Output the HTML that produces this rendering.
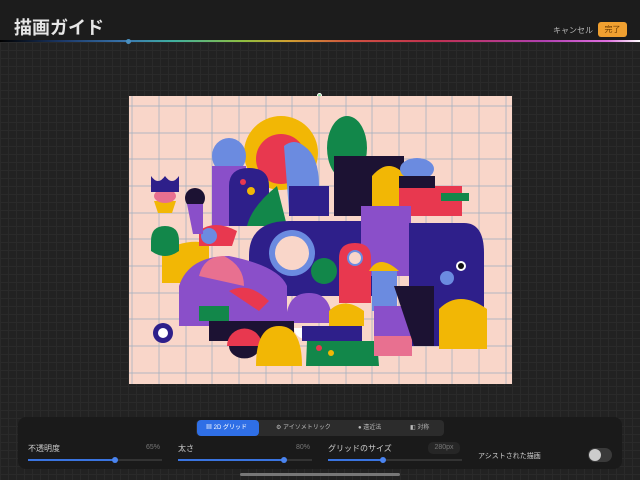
<!DOCTYPE html><html><head><meta charset="utf-8"><style>
*{margin:0;padding:0;box-sizing:border-box}
body{width:640px;height:480px;overflow:hidden;background:#202020;font-family:"Liberation Sans","Noto Sans CJK JP",sans-serif;position:relative;color:#ddd}
.bg{position:absolute;left:0;top:42px;width:640px;height:438px;background-color:#222;background-image:linear-gradient(#2a2a2a 1px,transparent 1px),linear-gradient(90deg,#2a2a2a 1px,transparent 1px);background-size:8px 8px}
.top{position:absolute;left:0;top:0;width:640px;height:41px;background:#1c1c1c}
.title{position:absolute;left:14px;top:14px;font-size:18px;font-weight:bold;color:#e6e6e6}
.cancel{position:absolute;left:553px;top:25px;font-size:8px;color:#bbb}
.done{position:absolute;left:598px;top:22px;width:29px;height:15px;background:#f0a030;border-radius:3px;font-size:8px;color:#6a3a00;text-align:center;line-height:15px}
.rain{position:absolute;left:0;top:40px;width:640px;height:2px;background:linear-gradient(90deg,#000 0%,#1d3a6a 10%,#3a78b0 20%,#3fb0a0 27%,#8fbf40 38%,#d0a030 45%,#d05040 55%,#c03050 68%,#b040b0 85%,#e070e0 95%,#fff 100%)}
.dot{position:absolute;left:126px;top:39px;width:5px;height:5px;border-radius:50%;background:#4a90c0}
.canvas{position:absolute;left:129px;top:96px;width:383px;height:288px}
.panel{position:absolute;left:18px;top:417px;width:604px;height:52px;background:#1a1a1a;border-radius:8px}
.tabs{position:absolute;left:196px;top:420px;width:248px;height:16px;background:#2c2c2c;border-radius:4px;font-size:6px;color:#bbb}
.tab{position:absolute;top:0;height:16px;line-height:16px}
.act{left:1px;width:62px;background:#2f6fe6;border-radius:4px;color:#fff;padding-left:9px}
.lab{position:absolute;font-size:8px;color:#cfcfcf;top:443px}
.pct{position:absolute;font-size:7px;color:#777;top:444px}
.track{position:absolute;top:459px;height:2px;background:#333;width:134px}
.fill{position:absolute;left:0;top:0;height:2px;background:#3a74e0}
.thumb{position:absolute;top:-2px;width:6px;height:6px;border-radius:50%;background:#4a84f0}
</style></head><body>
<div class="bg"></div>
<div class="top"></div>
<div class="title">描画ガイド</div>
<div class="cancel">キャンセル</div>
<div class="done">完了</div>
<div class="rain"></div><div class="dot"></div>
<div style="position:absolute;left:317px;top:93px;width:5px;height:5px;border-radius:50%;background:#8fdc9a;border:1px solid #fff"></div>
<svg class="canvas" viewBox="0 0 383 288" width="383" height="288">
<rect width="383" height="288" fill="#f9d6c9"/>
<g stroke="#8ea6bd" stroke-width="0.7" opacity="0.85">
<path d="M3 0V288M30 0V288M57 0V288M83 0V288M110 0V288M137 0V288M163 0V288M190 0V288M217 0V288M243 0V288M270 0V288M297 0V288M323 0V288M350 0V288M377 0V288"/>
<path d="M0 10H383M0 37H383M0 63H383M0 90H383M0 117H383M0 143H383M0 170H383M0 197H383M0 223H383M0 250H383M0 277H383"/>
</g>
<circle cx="152" cy="57" r="37" fill="#f2b705"/>
<circle cx="152" cy="63" r="25" fill="#e8384f"/>
<ellipse cx="218" cy="52" rx="20" ry="32" fill="#12874a"/>
<path d="M205 60h70v60h-70z" fill="#1c1233"/>
<ellipse cx="100" cy="60" rx="17" ry="18" fill="#6b8be0"/>
<rect x="83" y="70" width="34" height="60" fill="#8a4fc9"/>
<path d="M100 130V90q0-18 20-18t20 18v40z" fill="#2e1f8a"/>
<circle cx="114" cy="86" r="3" fill="#e8384f"/><circle cx="122" cy="95" r="4" fill="#f2b705"/>
<path d="M155 50q10-8 20 0q15 10 15 40l-30 25z" fill="#6b8be0"/>
<rect x="160" y="90" width="40" height="30" fill="#2e1f8a"/>
<path d="M118 130q5-20 30-40l10 40z" fill="#12874a"/>
<path d="M243 80q17-20 34 0v33h-34z" fill="#f2b705"/>
<path d="M270 90h63v30h-63z" fill="#e8384f"/>
<ellipse cx="288" cy="73" rx="17" ry="11" fill="#6b8be0"/>
<rect x="270" y="80" width="36" height="12" fill="#1c1233"/>
<path d="M312 97h28v8h-28z" fill="#12874a"/>
<path d="M120 160q0-35 40-35h75q20 0 25 35v40h-140z" fill="#2e1f8a"/>
<path d="M232 110h50v70h-50z" fill="#8a4fc9"/>
<path d="M280 127h55q20 0 20 30v93h-75z" fill="#2e1f8a"/>
<circle cx="332" cy="170" r="5" fill="#fff"/><circle cx="332" cy="170" r="3" fill="#111"/>
<circle cx="318" cy="182" r="7" fill="#6b8be0"/>
<path d="M310 253v-40q20-20 48 0v40z" fill="#f2b705"/>
<circle cx="163" cy="157" r="23" fill="#6b8be0"/><circle cx="163" cy="157" r="17" fill="#f9d6c9"/>
<path d="M210 207v-45q0-15 16-15t16 15v45z" fill="#e8384f"/>
<circle cx="226" cy="162" r="8" fill="#6b8be0"/><circle cx="226" cy="162" r="6" fill="#f9d6c9"/>
<path d="M243 175h25v40h-25z" fill="#6b8be0"/><path d="M240 175q10-18 30 0z" fill="#f2b705"/>
<circle cx="195" cy="175" r="13" fill="#12874a"/>
<path d="M157 227q0-30 23-30t23 30z" fill="#8a4fc9"/>
<path d="M33 187v-30q20-15 47-10v40z" fill="#f2b705"/>
<path d="M50 190q10-30 50-30q50 10 58 30v40h-108z" fill="#8a4fc9"/>
<path d="M70 180q5-20 25-20q20 10 20 30z" fill="#e87090"/>
<path d="M70 135q15-12 38 0l-5 15h-33z" fill="#e8384f"/>
<circle cx="80" cy="140" r="8" fill="#6b8be0"/>
<path d="M100 195q20-10 40 10l-10 10z" fill="#e8384f"/>
<path d="M80 225h85v20h-85z" fill="#1c1233"/>
<path d="M70 210h30v15h-30z" fill="#12874a"/>
<path d="M22 145q0-15 14-15t14 15v10q-14 10-28 0z" fill="#12874a"/>
<path d="M25 105h22l-4 12h-14z" fill="#f2b705"/>
<ellipse cx="36" cy="100" rx="11" ry="7" fill="#e87090"/>
<path d="M22 80q7 10 14 0q7 10 14 0v16h-28z" fill="#2e1f8a"/>
<circle cx="66" cy="102" r="10" fill="#1c1233"/><path d="M58 108h16v30h-10z" fill="#8a4fc9"/>
<circle cx="34" cy="237" r="10" fill="#2e1f8a"/><circle cx="34" cy="237" r="5" fill="#fff"/>
<path d="M98 250a17 17 0 0 1 35 0z" fill="#e8384f"/><path d="M100 250a15 12 0 0 0 31 0z" fill="#1c1233"/>
<path d="M165 232a12 10 0 0 0 28 0z" fill="#fff"/>
<path d="M127 270q0-40 23-40t23 40z" fill="#f2b705"/>
<path d="M178 245h70l2 25h-73z" fill="#12874a"/>
<circle cx="190" cy="252" r="3" fill="#e8384f"/><circle cx="202" cy="257" r="3" fill="#f2b705"/>
<path d="M173 245h60v-15h-60z" fill="#2e1f8a"/>
<path d="M200 215q15-15 35 0v15h-35z" fill="#f2b705"/>
<path d="M245 240h38v20h-38z" fill="#e87090"/>
<path d="M245 210h40v30h-40z" fill="#8a4fc9"/>
<path d="M265 190h40v60h-20z" fill="#1c1233"/>
</svg>
<div class="panel"></div>
<div class="tabs">
<div class="tab act">▦ 2D グリッド</div>
<div class="tab" style="left:80px">⚙ アイソメトリック</div>
<div class="tab" style="left:162px">● 遠近法</div>
<div class="tab" style="left:214px">◧ 対称</div>
</div>
<div class="lab" style="left:28px">不透明度</div><div class="pct" style="left:146px">65%</div>
<div class="lab" style="left:178px">太さ</div><div class="pct" style="left:296px">80%</div>
<div class="lab" style="left:328px">グリッドのサイズ</div>
<div style="position:absolute;left:428px;top:442px;width:32px;height:12px;border-radius:5px;background:#262626;font-size:7px;color:#777;text-align:center;line-height:12px">280px</div>
<div class="track" style="left:28px"><div class="fill" style="width:87px"></div><div class="thumb" style="left:84px"></div></div>
<div class="track" style="left:178px"><div class="fill" style="width:106px"></div><div class="thumb" style="left:103px"></div></div>
<div class="track" style="left:328px"><div class="fill" style="width:55px"></div><div class="thumb" style="left:52px"></div></div>
<div class="lab" style="left:478px;top:451px;font-size:7px">アシストされた描画</div>
<div style="position:absolute;left:588px;top:448px;width:24px;height:14px;border-radius:7px;background:#3a3a3a"><div style="position:absolute;left:1px;top:1px;width:12px;height:12px;border-radius:50%;background:#ccc"></div></div>
<div style="position:absolute;left:240px;top:473px;width:160px;height:3px;border-radius:2px;background:#777"></div>
</body></html>
